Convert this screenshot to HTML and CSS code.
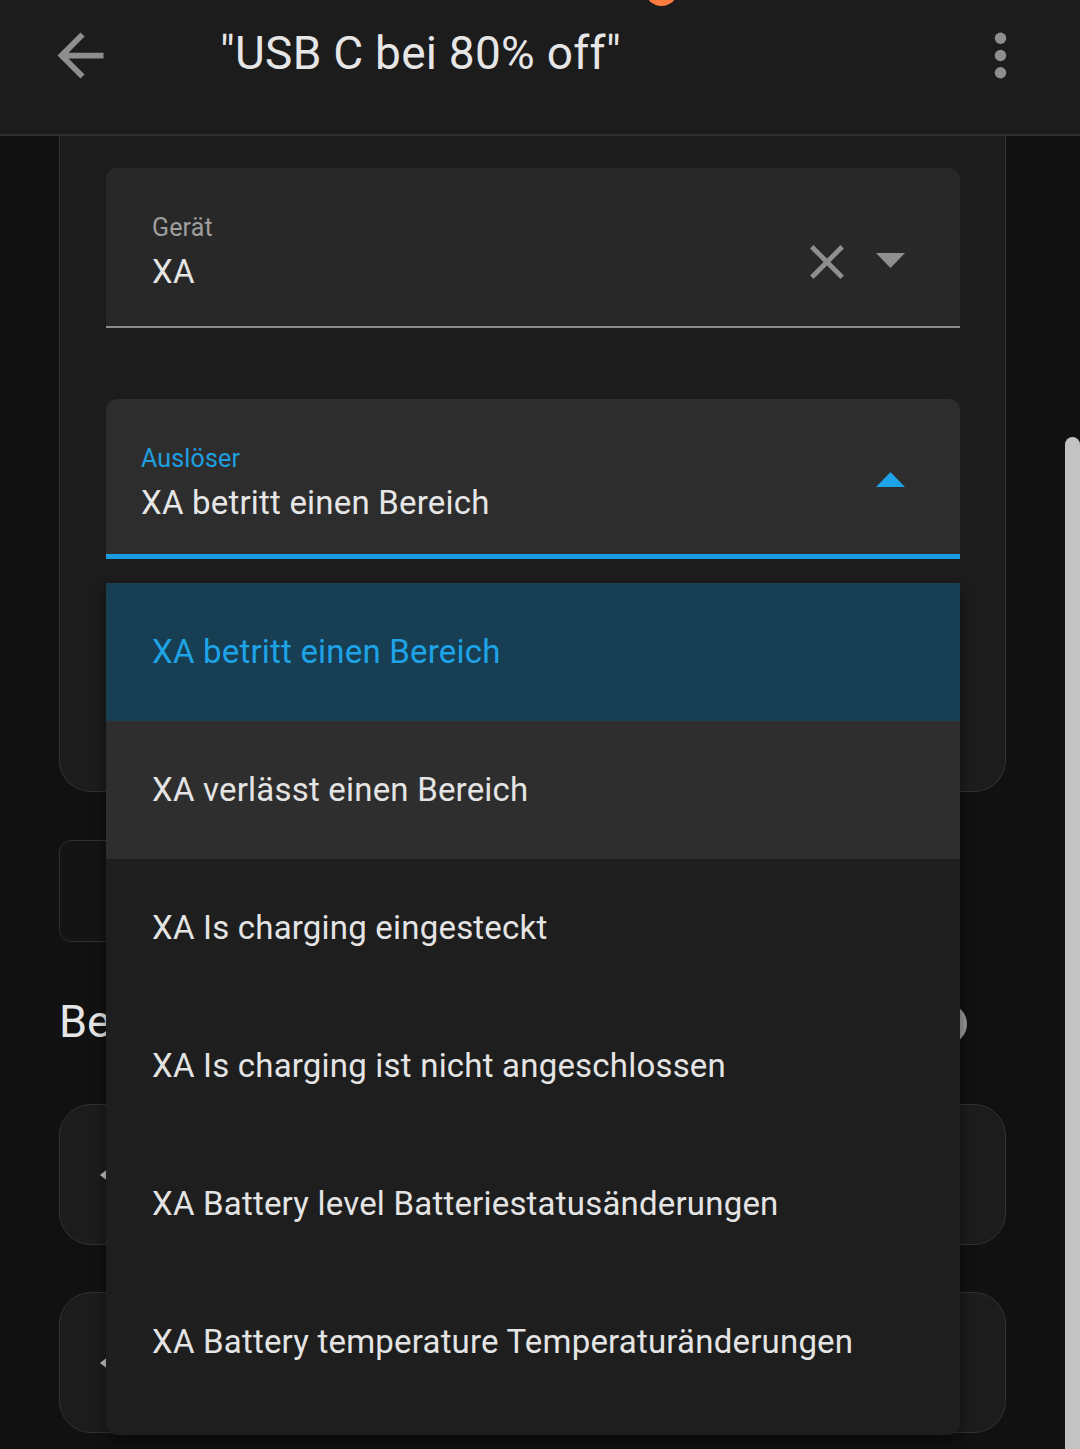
FILE: index.html
```html
<!DOCTYPE html>
<html lang="de">
<head>
<meta charset="utf-8">
<title>USB C bei 80% off</title>
<link rel="stylesheet" href="styles.css">
</head>
<body>
<div class="screen">
  <header class="appbar">
    <span class="notif-dot"></span>
    <div class="toolbar">
      <svg class="icon back" viewBox="0 0 24 24"><path d="M20 11H7.83l5.59-5.59L12 4l-8 8 8 8 1.41-1.41L7.83 13H20v-2z"/></svg>
      <h1 class="title">"USB C bei 80% off"</h1>
      <svg class="icon more" viewBox="0 0 24 24"><circle cx="12" cy="6" r="2"/><circle cx="12" cy="12" r="2"/><circle cx="12" cy="18" r="2"/></svg>
    </div>
  </header>

  <main class="content">
    <section class="card trigger-card">
      <div class="field field-device">
        <div class="field-text">
          <div class="field-label">Gerät</div>
          <div class="field-value">XA</div>
        </div>
        <svg class="clear-icon" viewBox="0 0 24 24"><path d="M19 6.41L17.59 5 12 10.59 6.41 5 5 6.41 10.59 12 5 17.59 6.41 19 12 13.41 17.59 19 19 17.59 13.41 12z"/></svg>
        <svg class="caret caret-down" viewBox="0 0 29 15"><polygon points="0,0 29,0 14.5,15"/></svg>
      </div>

      <div class="field field-trigger">
        <div class="field-text">
          <div class="field-label">Auslöser</div>
          <div class="field-value">XA betritt einen Bereich</div>
        </div>
        <svg class="caret caret-up" viewBox="0 0 29 15"><polygon points="0,15 29,15 14.5,0"/></svg>
      </div>
    </section>

    <div class="add-button">Auslöser hinzufügen</div>

    <div class="section-head">
      <h2 class="section-title">Bedingungen</h2>
      <span class="help-circle"></span>
    </div>

    <div class="card row-card"><span class="chev"></span></div>
    <div class="card row-card second"><span class="chev"></span></div>
  </main>

  <ul class="menu">
    <li class="menu-item selected">XA betritt einen Bereich</li>
    <li class="menu-item hover">XA verlässt einen Bereich</li>
    <li class="menu-item">XA Is charging eingesteckt</li>
    <li class="menu-item">XA Is charging ist nicht angeschlossen</li>
    <li class="menu-item">XA Battery level Batteriestatusänderungen</li>
    <li class="menu-item">XA Battery temperature Temperaturänderungen</li>
  </ul>

  <div class="scrollbar"></div>
</div>
</body>
</html>
```

FILE: styles.css
```css
* { box-sizing: border-box; }

html, body {
  margin: 0;
  padding: 0;
  background: #111111;
}

body {
  font-family: Roboto, "Noto Sans", "Liberation Sans", sans-serif;
  color: #e4e4e4;
}

.screen {
  position: relative;
  width: 1080px;
  height: 1449px;
  overflow: hidden;
  background: #111111;
}

/* App bar */
.appbar {
  position: relative;
  height: 136px;
  background: #1c1c1c;
  border-bottom: 2px solid #2e2e2e;
}

.notif-dot {
  position: absolute;
  left: 645px;
  top: -27px;
  width: 33px;
  height: 33px;
  border-radius: 50%;
  background: #fe7c3f;
}

.toolbar {
  height: 110px;
  display: flex;
  align-items: center;
  padding: 0 45px 0 46px;
}

.icon {
  width: 69px;
  height: 69px;
  fill: #8e8e8e;
  flex: none;
}

.title {
  margin: 0 0 5px 105px;
  flex: 1;
  font-size: 46px;
  line-height: 46px;
  font-weight: 400;
  letter-spacing: 0.25px;
  color: #e6e6e6;
  white-space: nowrap;
}

/* Content */
.content {
  padding: 0 74px 0 59px;
}

.card {
  background: #1c1c1c;
  border: 1px solid #323232;
  border-radius: 32px;
}

.trigger-card {
  border-top: none;
  border-radius: 0 0 32px 32px;
  padding: 32px 45px 232px 46px;
}

.field {
  position: relative;
  height: 160px;
  display: flex;
  align-items: flex-start;
  border-radius: 11px 11px 0 0;
}

.field-device {
  background: #282828;
  border-bottom: 2px solid #8c8c8c;
  padding-left: 46px;
}

.field-trigger {
  margin-top: 71px;
  background: #2d2d2d;
  border-bottom: 5px solid #1b9be0;
  padding-left: 35px;
}

.field-text {
  flex: 1;
  padding-top: 45px;
}

.field-label {
  font-size: 25px;
  line-height: 30px;
  letter-spacing: 0.15px;
  color: #9e9e9e;
}

.field-trigger .field-label {
  color: #1f9fe0;
}

.field-value {
  margin-top: 9px;
  font-size: 33px;
  line-height: 40px;
  letter-spacing: 0.2px;
  color: #e6e6e6;
  white-space: nowrap;
}

.clear-icon {
  width: 58px;
  height: 58px;
  margin-top: 65px;
  fill: #8f8f8f;
  flex: none;
}

.caret {
  width: 29px;
  height: 15px;
  flex: none;
  margin-right: 55px;
}

.caret-down {
  margin-top: 85px;
  margin-left: 20px;
  fill: #8f8f8f;
}

.caret-up {
  margin-top: 73px;
  fill: #1ea3e6;
}

.add-button {
  margin-top: 48px;
  width: 420px;
  height: 102px;
  border: 1px solid #303030;
  border-radius: 12px;
  background: #141414;
  color: transparent;
  font-size: 30px;
  line-height: 100px;
  padding-left: 40px;
}

.section-head {
  margin-top: 50px;
  height: 60px;
  display: flex;
  align-items: center;
  padding-right: 39px;
}

.section-title {
  flex: 1;
  margin: 0;
  font-size: 45px;
  line-height: 60px;
  font-weight: 400;
  color: #e6e6e6;
}

.help-circle {
  width: 40px;
  height: 40px;
  border-radius: 50%;
  background: #9a9a9a;
  margin-top: 4px;
}

.row-card {
  margin-top: 52px;
  height: 141px;
  display: flex;
  align-items: center;
  padding-left: 40px;
}

.row-card.second {
  margin-top: 47px;
}

.chev {
  width: 0;
  height: 0;
  border-top: 7px solid transparent;
  border-bottom: 7px solid transparent;
  border-right: 9px solid #c4c4c4;
}

/* Dropdown menu */
.menu {
  position: absolute;
  left: 106px;
  top: 583px;
  width: 854px;
  height: 852px;
  margin: 0;
  padding: 0 0 24px 0;
  list-style: none;
  background: #1e1e1e;
  border-radius: 0 0 12px 12px;
  box-shadow: 0 6px 14px rgba(0, 0, 0, 0.45);
  overflow: hidden;
}

.menu-item {
  height: 138px;
  line-height: 138px;
  padding-left: 46px;
  font-size: 33px;
  letter-spacing: 0.2px;
  color: #e4e4e4;
  white-space: nowrap;
}

.menu-item.selected {
  background: #173e53;
  color: #1ea3e6;
}

.menu-item.hover {
  background: #2e2e2e;
}

.scrollbar {
  position: absolute;
  right: 0;
  top: 437px;
  bottom: 0;
  width: 15px;
  background: #c3c3c3;
  border-radius: 8px 8px 0 0;
}
```
